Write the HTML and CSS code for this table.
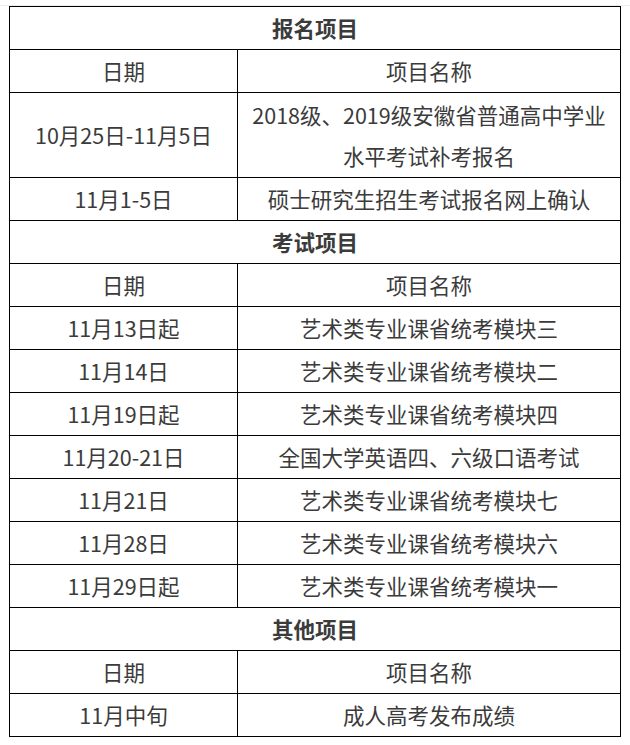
FILE: index.html
```html
<!DOCTYPE html>
<html lang="zh-CN">
<head>
<meta charset="utf-8">
<link rel="stylesheet" href="styles.css">
</head>
<body>
<div class="rule"></div>
<table class="sched">
  <colgroup><col class="c-date"><col class="c-name"></colgroup>
  <tr><td colspan="2" class="sec">报名项目</td></tr>
  <tr><td>日期</td><td>项目名称</td></tr>
  <tr><td>10月25日-11月5日</td><td class="two">2018级、2019级安徽省普通高中学业<br>水平考试补考报名</td></tr>
  <tr><td>11月1-5日</td><td>硕士研究生招生考试报名网上确认</td></tr>
  <tr><td colspan="2" class="sec">考试项目</td></tr>
  <tr><td>日期</td><td>项目名称</td></tr>
  <tr><td>11月13日起</td><td>艺术类专业课省统考模块三</td></tr>
  <tr><td>11月14日</td><td>艺术类专业课省统考模块二</td></tr>
  <tr><td>11月19日起</td><td>艺术类专业课省统考模块四</td></tr>
  <tr><td>11月20-21日</td><td>全国大学英语四、六级口语考试</td></tr>
  <tr><td>11月21日</td><td>艺术类专业课省统考模块七</td></tr>
  <tr><td>11月28日</td><td>艺术类专业课省统考模块六</td></tr>
  <tr><td>11月29日起</td><td>艺术类专业课省统考模块一</td></tr>
  <tr><td colspan="2" class="sec">其他项目</td></tr>
  <tr><td>日期</td><td>项目名称</td></tr>
  <tr><td>11月中旬</td><td>成人高考发布成绩</td></tr>
</table>
</body>
</html>
```
FILE: styles.css
```css
html, body {
  margin: 0;
  padding: 0;
  background: #fff;
}
body {
  font-family: "Noto Sans CJK SC", "Microsoft YaHei", sans-serif;
  color: #3b3b3b;
}
.rule {
  margin-top: 5px;
  height: 1px;
  background: #ececec;
}
.sched {
  margin-left: 9px;
  border-collapse: collapse;
  width: 612px;
  table-layout: fixed;
  font-size: 21.5px;
}
.c-date { width: 228px; }
.sched td {
  border: 1px solid #000;
  padding: 0;
  height: 42px;
  line-height: 42px;
  text-align: center;
  white-space: nowrap;
}
.sched td.two {
  line-height: 41px;
  padding: 1px 0;
  height: 82px;
}
.sched td.sec {
  font-weight: bold;
}
```
